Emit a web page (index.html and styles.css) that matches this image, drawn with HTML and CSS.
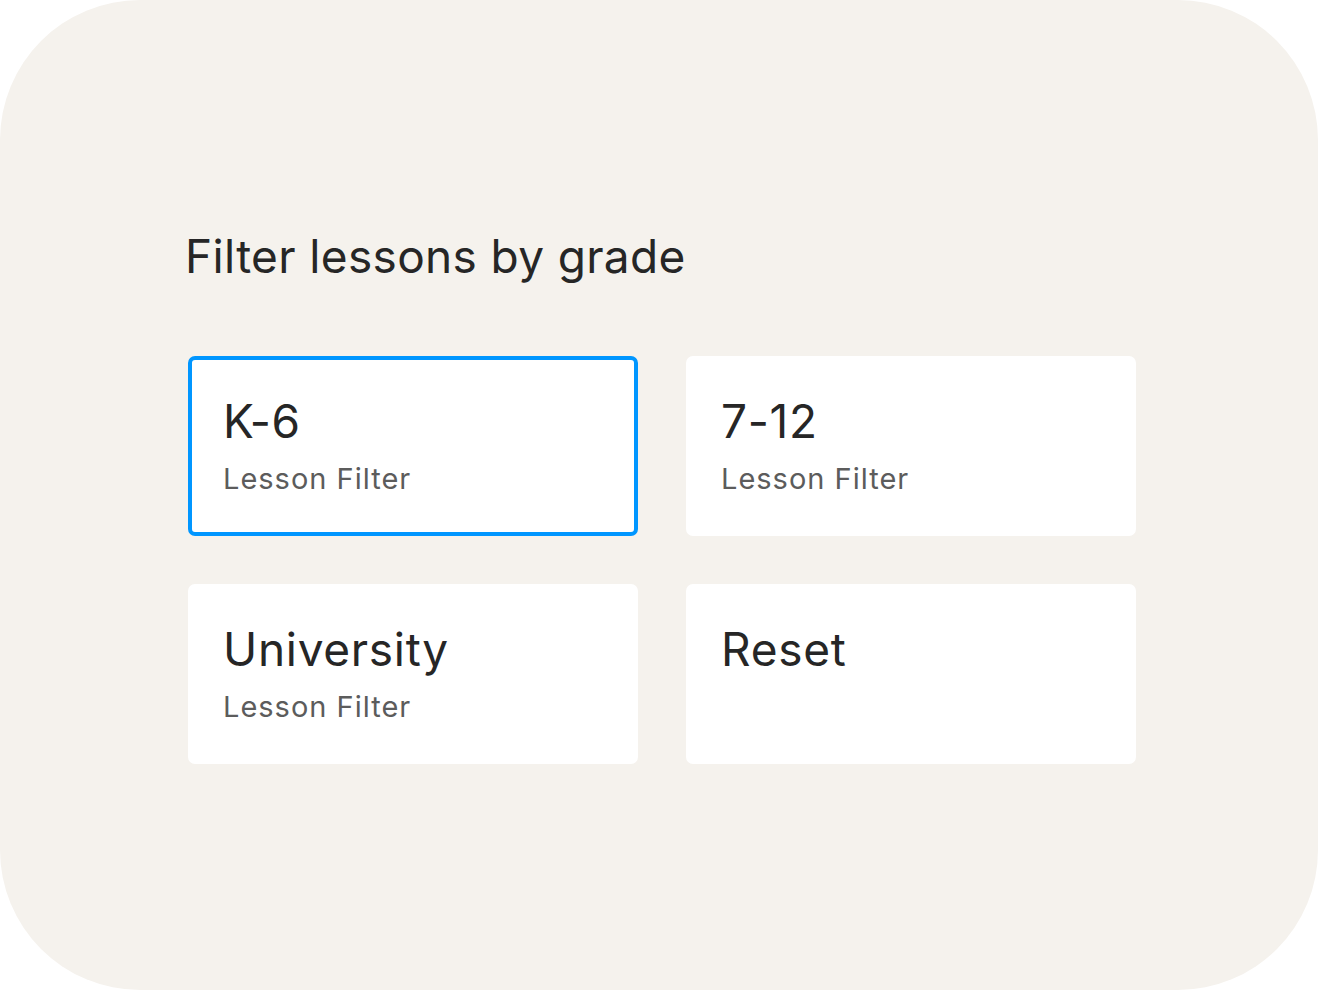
FILE: index.html
```html
<!DOCTYPE html>
<html>
<head>
<meta charset="utf-8">
<link rel="stylesheet" href="styles.css">
</head>
<body>
<div class="panel">
  <h1 class="heading">Filter lessons by grade</h1>
  <div class="grid">
    <div class="card selected">
      <div class="card-title">K-6</div>
      <div class="card-sub">Lesson Filter</div>
    </div>
    <div class="card">
      <div class="card-title">7-12</div>
      <div class="card-sub">Lesson Filter</div>
    </div>
    <div class="card">
      <div class="card-title">University</div>
      <div class="card-sub">Lesson Filter</div>
    </div>
    <div class="card">
      <div class="card-title">Reset</div>
    </div>
  </div>
</div>
</body>
</html>
```
FILE: styles.css
```css
html, body {
  margin: 0;
  padding: 0;
  background: #ffffff;
}
body {
  font-family: Inter, "Noto Sans", sans-serif;
  color: #262626;
}
.panel {
  width: 1318px;
  height: 990px;
  box-sizing: border-box;
  background: #f5f2ed;
  border-radius: 140px;
  padding: 226px 0 0 188px;
}
.heading {
  margin: 0 0 0 -3px;
  font-size: 46px;
  font-weight: 400;
  line-height: 60px;
  color: #262626;
  letter-spacing: 0.35px;
}
.grid {
  margin-top: 70px;
  display: grid;
  grid-template-columns: 450px 450px;
  grid-auto-rows: 180px;
  gap: 48px;
}
.card {
  background: #ffffff;
  border-radius: 7px;
  box-sizing: border-box;
  padding: 34px 32px;
  border: 3px solid #ffffff;
}
.card.selected {
  border: 4px solid #0096ff;
  padding: 33px 31px;
}
.card-title {
  font-size: 46px;
  line-height: 56px;
  color: #262626;
  letter-spacing: 0.7px;
}
.card-sub {
  font-size: 29px;
  line-height: 36px;
  color: #5c5c5c;
  margin-top: 12px;
  letter-spacing: 1px;
}
```
